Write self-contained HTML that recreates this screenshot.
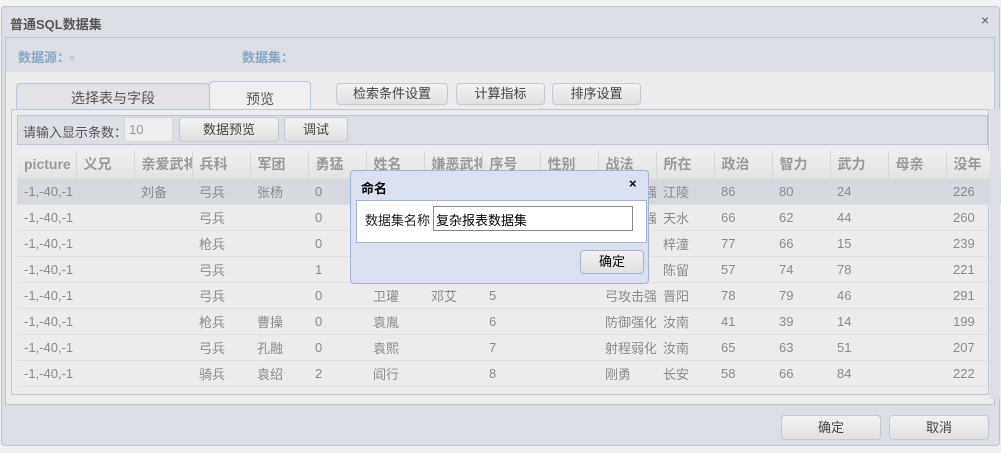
<!DOCTYPE html><html><head><meta charset="utf-8"><style>
*{box-sizing:border-box;margin:0;padding:0}
body{width:1001px;height:453px;background:#f0f0f0;font-family:"Liberation Sans","Noto Sans CJK SC",sans-serif;font-size:13px;position:relative;overflow:hidden;color:#555}
.a{position:absolute}
.btn{position:absolute;border:1px solid #c3cad6;border-radius:4px;background:linear-gradient(#f2f2f2,#e1e1e1);color:#444;text-align:center;font-size:13px}
table{border-collapse:collapse;table-layout:fixed}
td,th{height:26px;padding-left:7px;text-align:left;white-space:nowrap;overflow:hidden;color:#8a8a8a;font-weight:normal;border-bottom:1px solid #e0e0e0}
th{border-right:1px solid #d8d8d8;background:linear-gradient(#efefef,#e4e4e4);font-size:14px;color:#999;font-weight:bold;height:27px}
</style></head><body>
<div class="a" style="left:0;top:0;width:1001px;height:6px;background:#f3f3f3"></div>
<div class="a" style="left:1px;top:6px;width:999px;height:440px;background:#dcdfe6;border:1px solid #b9c5d8;border-radius:4px"></div>
<div class="a" style="left:10px;top:14px;font-size:13px;color:#555;font-weight:bold">普通SQL数据集</div>
<div class="a" style="left:981px;top:12px;font-size:14px;color:#555">×</div>
<div class="a" style="left:5px;top:37px;width:990px;height:368px;background:#ececec;border:1px solid #b9c5d8"></div>
<div class="a" style="left:6px;top:38px;width:988px;height:34px;background:#dcdfe6"></div>
<div class="a" style="left:18px;top:47px;color:#8aa6c4;font-weight:bold">数据源：▫</div>
<div class="a" style="left:242px;top:47px;color:#8aa6c4;font-weight:bold">数据集：</div>
<div class="a" style="left:16px;top:83px;width:194px;height:26px;background:#e2e3e7;border:1px solid #b9c5d8;border-bottom:none;border-radius:4px 4px 0 0;text-align:center;line-height:28px;font-size:14px">选择表与字段</div>
<div class="a" style="left:209px;top:81px;width:102px;height:29px;background:#efefef;border:1px solid #b9c5d8;border-bottom:none;border-radius:4px 4px 0 0;text-align:center;line-height:34px;font-size:14px">预览</div>
<div class="btn" style="left:336px;top:83px;width:112px;height:22px;line-height:20px">检索条件设置</div>
<div class="btn" style="left:456px;top:83px;width:89px;height:22px;line-height:20px">计算指标</div>
<div class="btn" style="left:552px;top:83px;width:89px;height:22px;line-height:20px">排序设置</div>
<div class="a" style="left:11px;top:109px;width:978px;height:286px;border:1px solid #b9c5d8;background:#ececec"></div>
<div class="a" style="left:17px;top:115px;width:971px;height:30px;background:#dcdfe6;border:1px solid #b9c5d8"></div>
<div class="a" style="left:23px;top:122px">请输入显示条数：</div>
<div class="a" style="left:124px;top:117px;width:49px;height:25px;background:#eeeeee;border:1px solid #d6d6d6;padding:4px 4px;color:#999">10</div>
<div class="btn" style="left:179px;top:117px;width:100px;height:25px;line-height:23px">数据预览</div>
<div class="btn" style="left:284px;top:117px;width:64px;height:25px;line-height:23px">调试</div>
<table class="a" style="left:17px;top:151px;width:983px">
<colgroup><col style="width:59px"><col style="width:58px"><col style="width:58px"><col style="width:58px"><col style="width:58px"><col style="width:58px"><col style="width:58px"><col style="width:58px"><col style="width:58px"><col style="width:58px"><col style="width:58px"><col style="width:58px"><col style="width:58px"><col style="width:58px"><col style="width:58px"><col style="width:58px"><col style="width:55px"></colgroup>
<tr><th>picture</th><th>义兄</th><th>亲爱武将</th><th>兵科</th><th>军团</th><th>勇猛</th><th>姓名</th><th>嫌恶武将</th><th>序号</th><th>性别</th><th>战法</th><th>所在</th><th>政治</th><th>智力</th><th>武力</th><th>母亲</th><th>没年</th></tr>
<tr style="background:#d5d9e2"><td>-1,-40,-1</td><td></td><td>刘备</td><td>弓兵</td><td>张杨</td><td>0</td><td></td><td></td><td></td><td></td><td>弓攻击强</td><td>江陵</td><td>86</td><td>80</td><td>24</td><td></td><td>226</td></tr>
<tr><td>-1,-40,-1</td><td></td><td></td><td>弓兵</td><td></td><td>0</td><td></td><td></td><td></td><td></td><td>弓攻击强</td><td>天水</td><td>66</td><td>62</td><td>44</td><td></td><td>260</td></tr>
<tr><td>-1,-40,-1</td><td></td><td></td><td>枪兵</td><td></td><td>0</td><td></td><td></td><td></td><td></td><td>连击</td><td>梓潼</td><td>77</td><td>66</td><td>15</td><td></td><td>239</td></tr>
<tr><td>-1,-40,-1</td><td></td><td></td><td>弓兵</td><td></td><td>1</td><td></td><td></td><td></td><td></td><td>突射</td><td>陈留</td><td>57</td><td>74</td><td>78</td><td></td><td>221</td></tr>
<tr><td>-1,-40,-1</td><td></td><td></td><td>弓兵</td><td></td><td>0</td><td>卫瓘</td><td>邓艾</td><td>5</td><td></td><td>弓攻击强</td><td>晋阳</td><td>78</td><td>79</td><td>46</td><td></td><td>291</td></tr>
<tr><td>-1,-40,-1</td><td></td><td></td><td>枪兵</td><td>曹操</td><td>0</td><td>袁胤</td><td></td><td>6</td><td></td><td>防御强化</td><td>汝南</td><td>41</td><td>39</td><td>14</td><td></td><td>199</td></tr>
<tr><td>-1,-40,-1</td><td></td><td></td><td>弓兵</td><td>孔融</td><td>0</td><td>袁熙</td><td></td><td>7</td><td></td><td>射程弱化</td><td>汝南</td><td>65</td><td>63</td><td>51</td><td></td><td>207</td></tr>
<tr><td>-1,-40,-1</td><td></td><td></td><td>骑兵</td><td>袁绍</td><td>2</td><td>阎行</td><td></td><td>8</td><td></td><td>刚勇</td><td>长安</td><td>58</td><td>66</td><td>84</td><td></td><td>222</td></tr>
</table>
<div class="a" style="left:990px;top:109px;width:10px;height:290px;background:#dcdfe6"></div>
<div class="btn" style="left:781px;top:415px;width:100px;height:25px;line-height:23px">确定</div>
<div class="btn" style="left:889px;top:415px;width:100px;height:25px;line-height:23px">取消</div>
<div class="a" style="left:350px;top:170px;width:299px;height:114px;background:#dce1f2;border:1px solid #9fb4d6;border-radius:4px"></div>
<div class="a" style="left:361px;top:178px;font-weight:bold;color:#000;font-size:13px">命名</div>
<div class="a" style="left:629px;top:176px;font-weight:bold;color:#000;font-size:13px">×</div>
<div class="a" style="left:356px;top:200px;width:291px;height:43px;background:#fff;border:1px solid #9fb4d6"></div>
<div class="a" style="left:365px;top:210px;color:#222">数据集名称</div>
<div class="a" style="left:433px;top:206px;width:200px;height:25px;border:1px solid #888;padding:3px 2px;color:#000">复杂报表数据集</div>
<div class="btn" style="left:580px;top:250px;width:64px;height:24px;line-height:22px;color:#000;border-color:#9fb4d6">确定</div>
</body></html>
